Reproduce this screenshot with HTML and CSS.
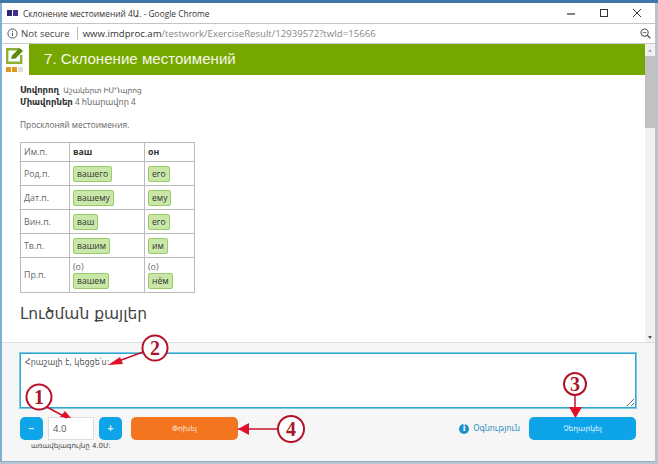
FILE: index.html
```html
<!DOCTYPE html>
<html lang="en">
<head>
    <meta charset="UTF-8">
    <meta name="viewport" content="width=device-width, initial-scale=1.0">
    <title>Склонение местоимений</title>
    <link rel="stylesheet" href="styles.css">
</head>
<body>
    <div class="desktop-strip"></div>

    <!-- Chrome popup window -->
    <div class="window">
        <div class="title-bar">
            <svg class="title-icon" width="11" height="6" viewBox="0 0 11 6">
                <rect x="0" y="0" width="5" height="6" fill="#2b2a78"/>
                <rect x="6" y="0" width="5" height="6" fill="#3f2f8e"/>
            </svg>
            <span class="title-text">Склонение местоимений 4Ա. - Google Chrome</span>
            <div class="window-controls">
                <svg width="10" height="10" viewBox="0 0 10 10"><path d="M1 6h8" stroke="#333" stroke-width="1.2"/></svg>
                <svg width="10" height="10" viewBox="0 0 10 10"><rect x="1.5" y="1.5" width="7" height="7" fill="none" stroke="#333" stroke-width="1"/></svg>
                <svg width="10" height="10" viewBox="0 0 10 10"><path d="M1 1l8 8M9 1l-8 8" stroke="#333" stroke-width="1"/></svg>
            </div>
        </div>

        <div class="address-bar">
            <svg class="info-icon" width="11" height="11" viewBox="0 0 11 11">
                <circle cx="5.5" cy="5.5" r="4.6" fill="none" stroke="#555" stroke-width="1"/>
                <path d="M5.5 4.8v3.2M5.5 2.8v1" stroke="#555" stroke-width="1"/>
            </svg>
            <span class="not-secure">Not secure</span>
            <span class="url"><b>www.imdproc.am</b>/testwork/ExerciseResult/12939572?twId=15666</span>
            <svg class="zoom-icon" width="11" height="11" viewBox="0 0 11 11">
                <circle cx="4.6" cy="4.6" r="3.6" fill="none" stroke="#555" stroke-width="1.1"/>
                <path d="M7.3 7.3l3 3" stroke="#555" stroke-width="1.3"/>
                <path d="M2.8 4.6h3.6" stroke="#555" stroke-width="0.9"/>
            </svg>
        </div>

        <div class="viewport">
            <div class="page">
                <div class="page-header">
                    <div class="logo">
                        <svg width="19" height="17" viewBox="0 0 19 17">
                            <path d="M13 2.2H1.2v13.6h14V8" fill="none" stroke="#8cb031" stroke-width="2.4"/>
                            <path d="M5 12l1-3.500L13.500 1 17 4l-7.500 7.500z" fill="#5f8a10"/>
                        </svg>
                        <div class="logo-dots">
                            <span class="dot"></span>
                            <span class="dot"></span>
                            <span class="dot dot-off"></span>
                        </div>
                    </div>
                    <h1>7. Склонение местоимений</h1>
                </div>

                <div class="content">
                    <p class="meta"><b>Սովորող</b> <small>Աշակերտ ԻՄԴպրոց</small></p>
                    <p class="meta"><b>Միավորներ</b> 4 հնարավոր 4</p>
                    <p class="task">Просклоняй местоимения.</p>

                    <table class="answers">
                        <tr class="row-head"><td>Им.п.</td><th>ваш</th><th>он</th></tr>
                        <tr><td>Род.п.</td><td><span class="answer">вашего</span></td><td><span class="answer">его</span></td></tr>
                        <tr><td>Дат.п.</td><td><span class="answer">вашему</span></td><td><span class="answer">ему</span></td></tr>
                        <tr><td>Вин.п.</td><td><span class="answer">ваш</span></td><td><span class="answer">его</span></td></tr>
                        <tr><td>Тв.п.</td><td><span class="answer">вашим</span></td><td><span class="answer">им</span></td></tr>
                        <tr class="row-tall"><td>Пр.п.</td><td>(о)<br><span class="answer">вашем</span></td><td>(о)<br><span class="answer">нём</span></td></tr>
                    </table>

                    <h2>Լուծման քայլեր</h2>
                </div>
            </div>

            <div class="scrollbar">
                <span class="arrow-up"></span>
                <div class="scroll-thumb"></div>
                <span class="arrow-down"></span>
            </div>
        </div>

        <!-- Comment and grade -->
        <div class="footer">
            <textarea class="comment">Հրաշալի է, կեցցե՛ս:</textarea>
            <div class="controls">
                <div class="grade">
                    <div class="grade-row">
                        <button class="btn-step">−</button>
                        <input class="grade-input" type="text" value="4.0">
                        <button class="btn-step">+</button>
                    </div>
                    <div class="grade-note">առավելագույնը 4.0Մ:</div>
                </div>
                <button class="btn-change">Փոխել</button>
                <a class="help"><span class="help-icon">i</span>Օգնություն</a>
                <button class="btn-cancel">Չեղարկել</button>
            </div>
        </div>
    </div>

    <!-- Red callouts drawn on top of the screenshot -->
    <svg class="callouts" width="658" height="464" viewBox="0 0 658 464">
        <g class="callout-line">
            <path d="M47 407l20 11"/>
            <path d="M143 352l-27 10"/>
            <path d="M575 394v22"/>
            <path d="M278 429h-40"/>
        </g>
        <g class="callout-head">
            <path d="M71 418l-11-1 5-6z"/>
            <path d="M108 365l12-8 3 7z"/>
            <path d="M569 407h13l-6.500 11z"/>
            <path d="M238 429l11-6v12z"/>
        </g>
        <g class="callout-ring">
            <circle cx="39" cy="397" r="12.500"/>
            <circle cx="155" cy="348" r="12.500"/>
            <circle cx="575" cy="384" r="11"/>
            <circle cx="291" cy="429" r="13"/>
        </g>
        <text x="39" y="404">1</text>
        <text x="155" y="355">2</text>
        <text x="575" y="391">3</text>
        <text x="291" y="436">4</text>
    </svg>
</body>
</html>
```

FILE: styles.css
```css
/* General Styles */
* {
    box-sizing: border-box;
}

body {
    margin: 0;
    width: 658px;
    height: 464px;
    overflow: hidden;
    background-color: #b4c4d0;
    font-family: "Open Sans", "DejaVu Sans", sans-serif;
    color: #666;
}

.desktop-strip {
    height: 3px;
    background-color: #3f78a8;
}

.window {
    width: 655px;
    height: 459px;
    border-left: 2px solid #7fb0d4;
    border-bottom: 1px solid #8fb0c8;
    background: white;
    display: flex;
    flex-direction: column;
}

/* Title Bar */
.title-bar {
    height: 21px;
    flex: none;
    display: flex;
    align-items: center;
    padding-left: 5px;
    border-bottom: 1px solid #c4c4c4;
}

.title-icon {
    margin-right: 5px;
}

.title-text {
    font-size: 8.4px;
    color: #333;
}

.window-controls {
    margin-left: auto;
    display: flex;
    gap: 23px;
    margin-right: 13px;
}

/* Address Bar */
.address-bar {
    height: 20px;
    flex: none;
    display: flex;
    align-items: center;
    padding-left: 5px;
    border-bottom: 1px solid #ccc;
    font-size: 9.6px;
}

.info-icon {
    margin-right: 3px;
}

.not-secure {
    color: #444;
    padding-right: 7px;
    margin-right: 5px;
    border-right: 1px solid #bbb;
    line-height: 13px;
}

.url {
    color: #888;
}

.url b {
    font-weight: 400;
    color: #333;
}

.zoom-icon {
    margin-left: auto;
    margin-right: 4px;
}

/* Page */
.viewport {
    flex: 1;
    display: flex;
    min-height: 0;
}

.page {
    flex: 1;
    overflow: hidden;
}

.page-header {
    height: 31px;
    display: flex;
}

.logo {
    width: 27px;
    padding: 3px 0 0 4px;
}

.logo svg {
    display: block;
}

.logo-dots {
    display: flex;
    gap: 1px;
    margin-top: 3px;
}

.dot {
    width: 5px;
    height: 5px;
    background-color: #d99a1e;
}

.dot-off {
    background-color: #ddd;
}

.page-header h1 {
    flex: 1;
    margin: 0;
    padding-left: 15px;
    background-color: #76a700;
    color: #f4f8e6;
    font-family: "Liberation Sans", sans-serif;
    font-size: 15.1px;
    font-weight: 400;
    line-height: 30px;
}

.content {
    padding: 9px 0 0 18px;
    font-size: 8.4px;
}

.meta {
    margin: 0;
    height: 12px;
    line-height: 12px;
    font-size: 8.2px;
}

.meta b {
    font-size: 8.5px;
    color: #333;
}

.meta small {
    font-size: 7.5px;
    margin-left: 2px;
}

.task {
    margin: 11px 0 11px;
    line-height: 12px;
}

/* Answers Table */
.answers {
    border-collapse: collapse;
    width: 175px;
    table-layout: fixed;
}

.answers td, .answers th {
    border: 1px solid #bbb;
    padding: 0 3px;
    height: 24px;
    font-size: 8.8px;
    text-align: left;
    font-weight: 400;
}

.answers td:first-child {
    width: 49px;
}

.answers tr td:nth-child(2), .answers th:nth-child(2) {
    width: 75px;
}

.answers th {
    font-weight: 700;
    color: #333;
}

.row-head td, .row-head th {
    height: 19px;
}

.row-tall td {
    height: 35px;
    line-height: 12px;
}

.answer {
    display: inline-block;
    background-color: #c9e8a8;
    border: 1px solid #9ccb6c;
    border-radius: 2px;
    padding: 0 3px;
    font-size: 8.6px;
    line-height: 14px;
    color: #333;
}

.content h2 {
    margin: 9px 0 0;
    font-family: "DejaVu Sans", sans-serif;
    font-size: 15.5px;
    font-weight: 400;
    color: #444;
    line-height: 24px;
}

/* Scrollbar */
.scrollbar {
    width: 10px;
    flex: none;
    background-color: #f1f1f1;
    display: flex;
    flex-direction: column;
    align-items: center;
}

.scroll-thumb {
    width: 10px;
    height: 72px;
    background-color: #c1c1c1;
    margin-top: 4px;
}

.arrow-up {
    margin-top: 5px;
    border: 2px solid transparent;
    border-top: 0;
    border-bottom: 3px solid #aaa;
}

.arrow-down {
    margin-top: auto;
    margin-bottom: 3px;
    border: 2.5px solid transparent;
    border-bottom: 0;
    border-top: 3px solid #555;
}

/* Footer */
.footer {
    height: 119px;
    flex: none;
    background-color: #f6f6f6;
    border-top: 1px solid #ddd;
    padding: 10px 19px 0 18px;
}

.comment {
    display: block;
    width: 100%;
    height: 55px;
    border: 1px solid #2fa6d0;
    border-radius: 0;
    outline: 1px solid #7cc8e2;
    padding: 4px 4px;
    font-family: "DejaVu Sans", sans-serif;
    font-size: 8px;
    color: #555;
    resize: both;
}

.controls {
    display: flex;
    align-items: flex-start;
    margin-top: 9px;
}

.grade-row {
    display: flex;
    gap: 5px;
}

.btn-step {
    width: 23px;
    height: 23px;
    padding: 0;
    border: none;
    border-radius: 5px;
    background-color: #0ea4e8;
    color: #dff3fd;
    font-weight: 700;
    font-size: 10px;
}

.grade-input {
    width: 46px;
    height: 23px;
    border: 1px solid #ddd;
    background: white;
    padding: 0 4px;
    font-family: "Open Sans", sans-serif;
    font-size: 9.5px;
    color: #555;
}

.grade-note {
    font-family: "DejaVu Sans", sans-serif;
    font-size: 7px;
    text-align: center;
    margin-top: 2px;
    color: #444;
}

.btn-change {
    width: 107px;
    height: 23px;
    margin-left: 9px;
    border: none;
    border-radius: 5px;
    background-color: #f47520;
    color: #fbe6d6;
    font-family: "DejaVu Sans", sans-serif;
    font-size: 7.5px;
}

.help {
    margin-left: auto;
    margin-right: 9px;
    display: flex;
    align-items: center;
    height: 23px;
    color: #2b8fc4;
    font-family: "DejaVu Sans", sans-serif;
    font-size: 8px;
}

.help-icon {
    width: 10px;
    height: 10px;
    border-radius: 50%;
    background-color: #1b8fd0;
    color: white;
    font-size: 8px;
    font-weight: 700;
    line-height: 10px;
    text-align: center;
    margin-right: 4px;
}

.btn-cancel {
    width: 107px;
    height: 23px;
    border: none;
    border-radius: 5px;
    background-color: #0ea4e8;
    color: #e4f6ff;
    font-family: "DejaVu Sans", sans-serif;
    font-size: 7.5px;
}

/* Callouts */
.callouts {
    position: absolute;
    top: 0;
    left: 0;
}

.callout-line path {
    fill: none;
    stroke: #c8102e;
    stroke-width: 1.5;
}

.callout-head path {
    fill: #e0102a;
}

.callout-ring circle {
    fill: white;
    stroke: #b5122a;
    stroke-width: 2;
}

.callouts text {
    font-family: "Liberation Serif", serif;
    font-size: 20px;
    font-weight: 700;
    fill: #a8182a;
    text-anchor: middle;
}
```
